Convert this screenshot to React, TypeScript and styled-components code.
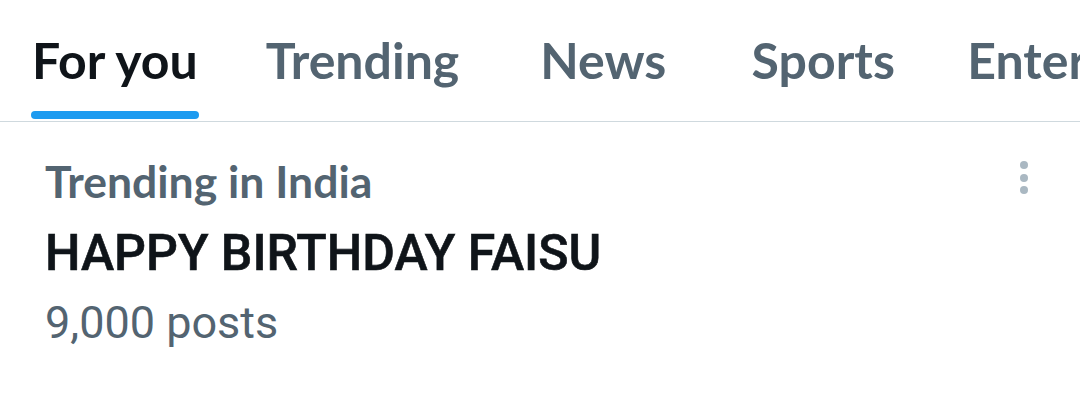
import React from "react";
import styled, { createGlobalStyle } from "styled-components";

const Global = createGlobalStyle`
  html, body { margin: 0; padding: 0; background: #ffffff; }
  body { width: 1080px; height: 420px; overflow: hidden; }
`;

const Page = styled.div`
  width: 1080px;
  height: 420px;
  background: #ffffff;
  display: flex;
  flex-direction: column;
  overflow: hidden;
`;

const TabBar = styled.nav`
  display: flex;
  height: 121px;
  border-bottom: 1px solid #cfd9de;
  white-space: nowrap;
  overflow: hidden;
`;

const Tab = styled.div`
  flex: none;
  min-width: 220px;
  box-sizing: border-box;
  padding: 0 34px;
  display: flex;
  justify-content: center;
  align-items: stretch;
  &:first-child {
    padding-left: 32px;
  }
`;

const TabInner = styled.div<{ $active?: boolean }>`
  position: relative;
  display: flex;
  align-items: flex-start;
  padding-top: 30px;
  font-family: Lato, "Noto Sans", sans-serif;
  font-weight: 700;
  font-size: 50px;
  line-height: 60px;
  color: ${(p) => (p.$active ? "#0f1419" : "#536471")};
`;

const Indicator = styled.span`
  position: absolute;
  left: -1px;
  right: -1px;
  bottom: 2px;
  height: 8px;
  border-radius: 4px;
  background: #1d9bf0;
`;

const Trend = styled.section`
  position: relative;
  display: flex;
  flex-direction: column;
  padding: 34px 45px 0 45px;
`;

const Context = styled.div`
  font-family: Lato, "Noto Sans", sans-serif;
  font-weight: 700;
  font-size: 44.5px;
  line-height: 50px;
  color: #536471;
`;

const Title = styled.div`
  margin-top: 18px;
  font-family: Roboto, "Noto Sans", sans-serif;
  font-weight: 500;
  font-size: 50px;
  line-height: 58px;
  color: #0f1419;
  -webkit-text-stroke: 0.6px #0f1419;
`;

const Count = styled.div`
  margin-top: 15px;
  font-family: Roboto, "Noto Sans", sans-serif;
  font-weight: 400;
  font-size: 45px;
  line-height: 52px;
  color: #536471;
`;

const More = styled.div`
  position: absolute;
  top: 39px;
  right: 48px;
  width: 16px;
  display: flex;
  flex-direction: column;
  align-items: center;
  gap: 4.5px;
`;

const Dot = styled.span`
  width: 8px;
  height: 8px;
  border-radius: 50%;
  background: #aab8c2;
`;

const tabs = ["For you", "Trending", "News", "Sports", "Entertainment"];

export default function App() {
  return (
    <Page>
      <Global />
      <TabBar>
        {tabs.map((t, i) => (
          <Tab key={t}>
            <TabInner $active={i === 0}>
              {t}
              {i === 0 && <Indicator />}
            </TabInner>
          </Tab>
        ))}
      </TabBar>
      <Trend>
        <Context>Trending in India</Context>
        <Title>HAPPY BIRTHDAY FAISU</Title>
        <Count>9,000 posts</Count>
        <More>
          <Dot />
          <Dot />
          <Dot />
        </More>
      </Trend>
    </Page>
  );
}
